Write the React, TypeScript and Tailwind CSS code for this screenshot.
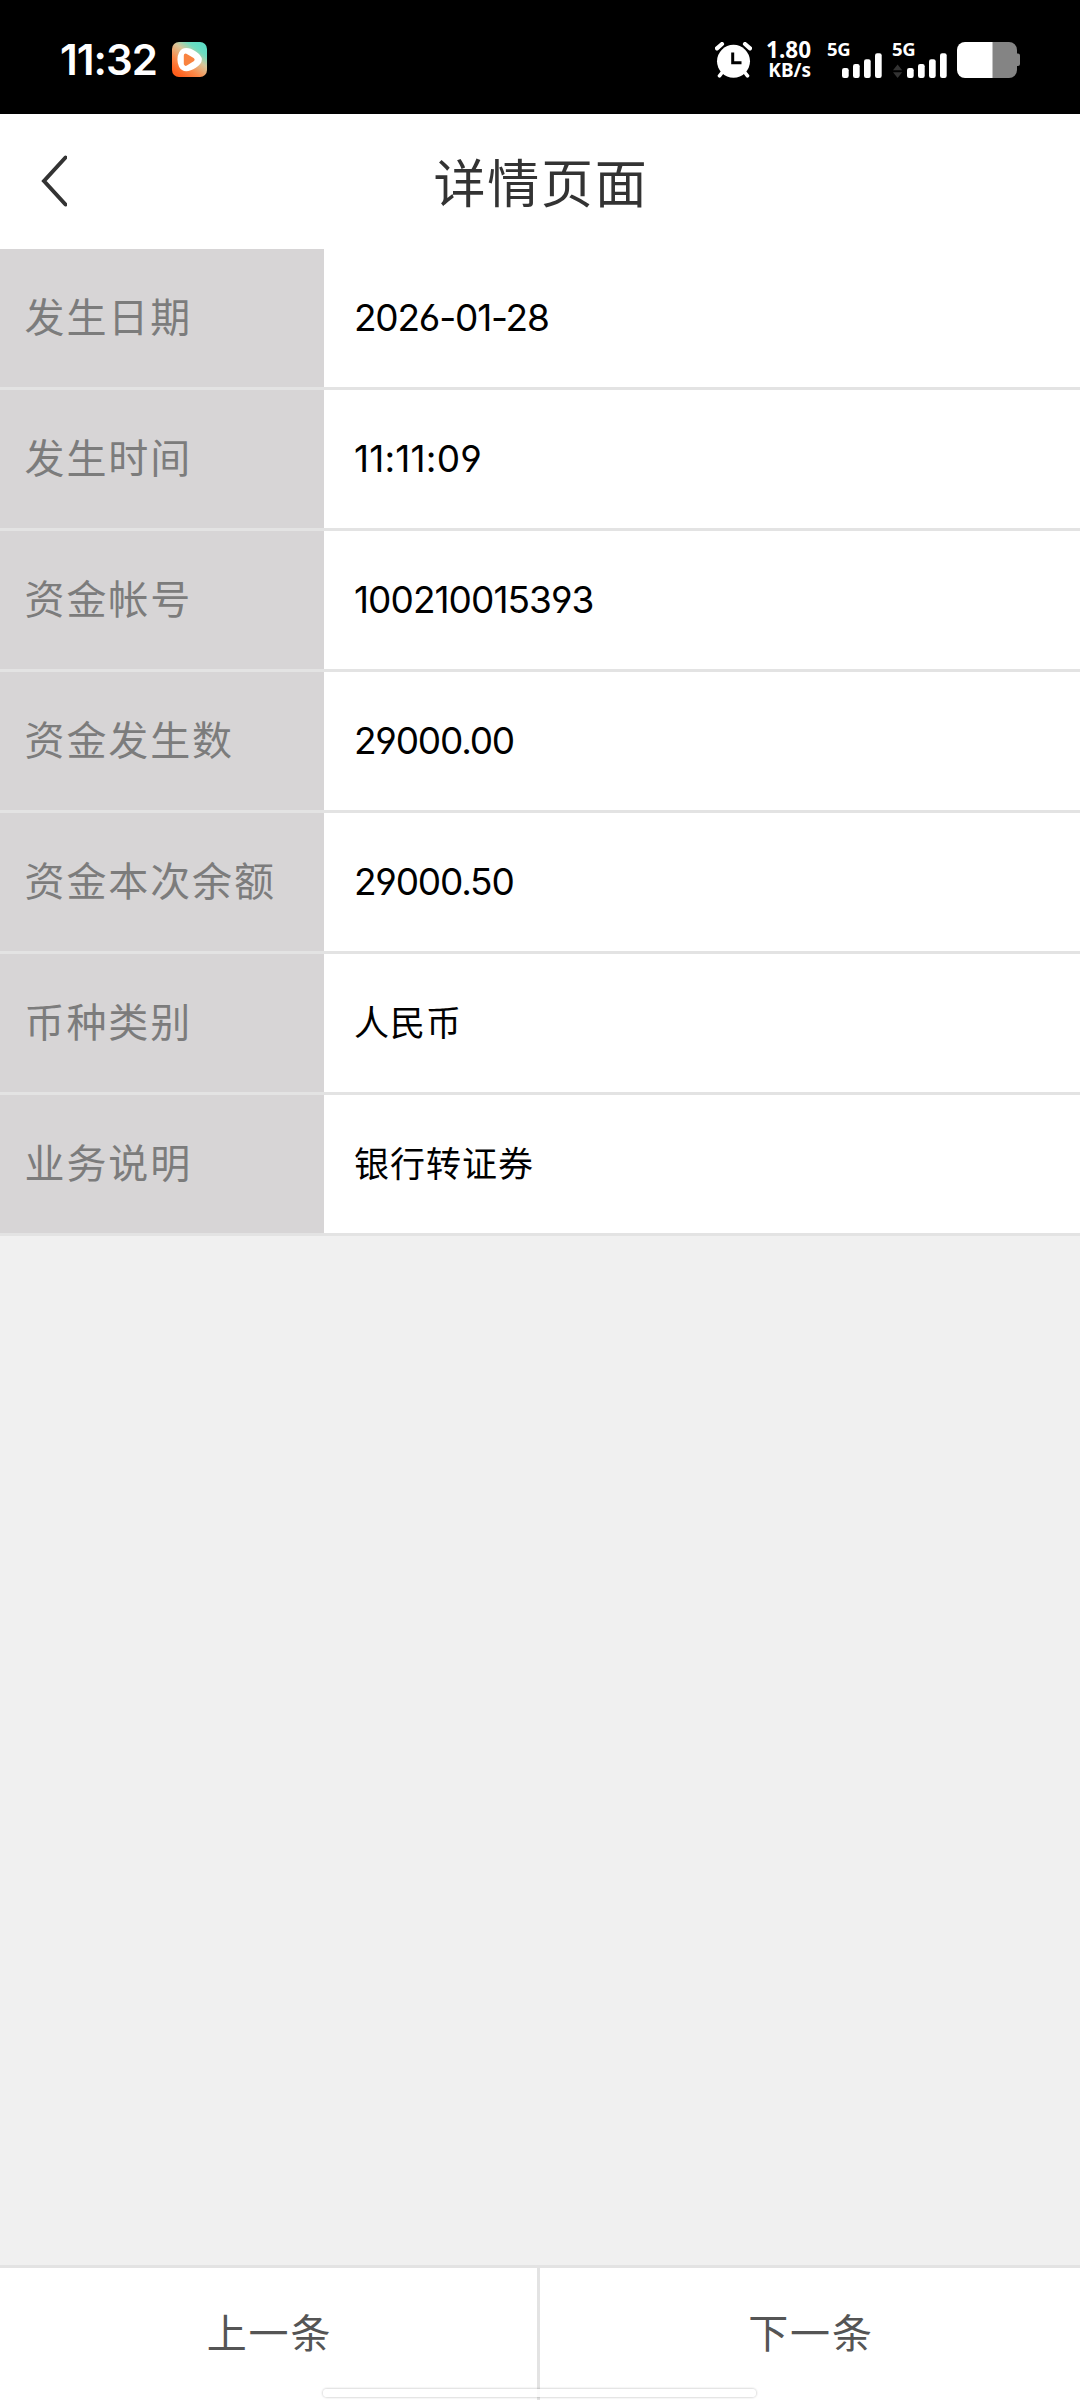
import { clsx } from "clsx"

type Row = { label: string; value: string; valueClass: string }

const rows: Row[] = [
  { label: "发生日期", value: "2026-01-28", valueClass: "text-[37px] tracking-[-1.2px]" },
  { label: "发生时间", value: "11:11:09", valueClass: "text-[37px] tracking-[0.2px]" },
  { label: "资金帐号", value: "100210015393", valueClass: "text-[37px] tracking-[-0.95px]" },
  { label: "资金发生数", value: "29000.00", valueClass: "text-[37px] tracking-[-1.2px]" },
  { label: "资金本次余额", value: "29000.50", valueClass: "text-[37px] tracking-[-1.2px]" },
  { label: "币种类别", value: "人民币", valueClass: "text-[35px] tracking-[1px]" },
  { label: "业务说明", value: "银行转证券", valueClass: "text-[35px] tracking-[1px]" },
]

function AppBadge() {
  return (
    <svg className="ml-[17px] size-[35px]" viewBox="0 0 35 35" aria-hidden="true">
      <defs>
        <linearGradient id="badge" x1="0.2" y1="0.95" x2="0.85" y2="0.1">
          <stop offset="0" stopColor="#ff5f1c" />
          <stop offset="0.3" stopColor="#fb8a4a" />
          <stop offset="0.62" stopColor="#d8c79b" />
          <stop offset="0.85" stopColor="#6edcc0" />
          <stop offset="1" stopColor="#5fdcc4" />
        </linearGradient>
      </defs>
      <rect width="35" height="35" rx="7" fill="url(#badge)" />
      <path
        d="M14.3 9.3C18.5 9.3 26.6 14.2 26.6 17.6C26.6 21 18.5 26 14.3 26C10 26 8.7 21.5 8.7 17.6C8.7 13.7 10 9.3 14.3 9.3Z"
        fill="#fff"
        stroke="#fff"
        strokeWidth="6.5"
        strokeLinejoin="round"
      />
      <path d="M13.8 13.6L20.6 17.6L13.8 21.8Z" fill="#f98340" stroke="#f98340" strokeWidth="4" strokeLinejoin="round" />
    </svg>
  )
}

function AlarmIcon() {
  return (
    <svg className="h-[36px] w-[37px]" viewBox="0 0 37 36" aria-hidden="true">
      <g stroke="#fff" strokeWidth="4.2" strokeLinecap="round">
        <path d="M2 6.3L7 2M30 2L35 6.3" />
        <path d="M7.5 30L4.5 33.8M29.5 30L32.5 33.8" strokeWidth="3.6" />
      </g>
      <circle cx="18.5" cy="19.3" r="16.5" fill="#fff" />
      <path d="M17.7 10.5V20.7H26.5" fill="none" stroke="#000" strokeWidth="3" />
    </svg>
  )
}

function Signal({ arrows = false }: { arrows?: boolean }) {
  return (
    <div className="relative h-[36px] w-[55px]">
      <span className="absolute -left-px top-0 text-[18.5px] font-bold leading-[14px] tracking-[-0.3px]">5G</span>
      <svg className="size-full" viewBox="0 0 55 36" aria-hidden="true">
        {arrows && <path d="M0 28.3L4.6 22.5L9.2 28.3ZM0 30.3H9.2L4.6 36Z" fill="#333" />}
        <g fill="#fff">
          <rect x="14" y="26" width="6.7" height="10" rx="2.2" />
          <rect x="25" y="22" width="6.7" height="14" rx="2.2" />
          <rect x="36" y="17.3" width="6.7" height="18.7" rx="2.2" />
          <rect x="47" y="11.3" width="6.7" height="24.7" rx="2.2" />
        </g>
      </svg>
    </div>
  )
}

function Battery() {
  return (
    <svg className="h-[36px] w-[63px]" viewBox="0 0 63 36" aria-hidden="true">
      <path d="M35 0H52A8 8 0 0 1 60 8V11.5H61A2 2 0 0 1 63 13.5V22A2 2 0 0 1 61 24H60V28A8 8 0 0 1 52 36H35Z" fill="#848484" />
      <path d="M8 0H35.5V36H8A8 8 0 0 1 0 28V8A8 8 0 0 1 8 0Z" fill="#fff" />
    </svg>
  )
}

function StatusBar() {
  return (
    <div className="flex h-[114px] items-start justify-between bg-black pl-[60px] pr-[60px] pt-[42px] font-['Noto_Sans','Noto_Sans_CJK_SC',sans-serif] text-white">
      <div className="flex">
        <span className="w-[95px] whitespace-nowrap font-['Inter',sans-serif] text-[42px] font-semibold leading-[36px] tracking-[-1px]">
          11:32
        </span>
        <AppBadge />
      </div>
      <div className="flex">
        <AlarmIcon />
        <div className="ml-[14px] flex w-[47px] flex-col items-end whitespace-nowrap pr-[2px] font-bold">
          <span className="text-[22.5px] leading-[16px]">1.80</span>
          <span className="mt-[4px] text-[19px] leading-[16px]">KB/s</span>
        </div>
        <div className="ml-[15px] flex gap-[10px]">
          <Signal />
          <Signal arrows />
        </div>
        <div className="ml-[9px]">
          <Battery />
        </div>
      </div>
    </div>
  )
}

export default function App() {
  return (
    <div className="flex h-[2400px] w-[1080px] flex-col overflow-hidden bg-[#f0f0f0] font-['Inter','Noto_Sans_CJK_SC',sans-serif]">
      <StatusBar />

      <header className="grid h-[135px] grid-cols-[200px_1fr_200px] items-center bg-white">
        <button className="pb-[2px] pl-[40px]" aria-label="返回">
          <svg className="h-[52px] w-[27px]" viewBox="0 0 27 52" fill="none" aria-hidden="true">
            <path d="M25.5 2.5L4 26L25.5 49.5" stroke="#333" strokeWidth="4" strokeLinecap="round" />
          </svg>
        </button>
        <h1 className="pl-[2px] pt-[6px] text-center text-[52px] leading-[60px] tracking-[1.8px] text-[#333]">详情页面</h1>
      </header>

      <dl>
        {rows.map((row) => (
          <div key={row.label} className="flex h-[141px] border-b-[3px] border-[#e3e3e3] bg-white">
            <dt className="flex w-[324px] items-center bg-[#d7d5d6] pb-[1px] pl-[24.5px] text-[40px] tracking-[1.9px] text-[#7c7c7c]">
              {row.label}
            </dt>
            <dd
              className={clsx(
                "flex flex-1 items-center pl-[30px] text-black [font-feature-settings:'cv03','cv04']",
                row.valueClass,
              )}
            >
              {row.value}
            </dd>
          </div>
        ))}
      </dl>

      {/* Bottom pager */}
      <footer className="relative mt-auto flex h-[135px] border-t-[3px] border-[#e3e3e3] bg-white text-[40px] tracking-[1.9px] text-[#555]">
        <button className="w-[540px] border-r-[3px] border-[#e3e3e3] pb-[1px] pl-[2px]">上一条</button>
        <button className="flex-1 pb-[1px] pl-[2px]">下一条</button>
        <div className="absolute bottom-[3px] left-[323px] h-[8px] w-[433px] rounded-full bg-white/85 shadow-[0_0_2px_1px_rgba(0,0,0,0.14)]" />
      </footer>
    </div>
  )
}
